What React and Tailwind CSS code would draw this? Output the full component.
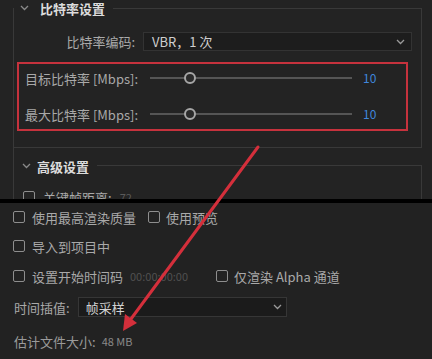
import React from 'react'

function Chevron({ className = '' }) {
  return (
    <svg width="9" height="6" viewBox="0 0 9 6" className={className}>
      <path d="M1 1 L4.5 4.5 L8 1" fill="none" stroke="currentColor" strokeWidth="1.3" />
    </svg>
  )
}

function Box() {
  return <span className="inline-block w-[12px] h-[12px] border-[1.5px] border-[#8e8e8e] rounded-[2px] shrink-0" />
}

function Slider({ pos }) {
  return (
    <div className="relative w-[202px] h-[12px] flex items-center">
      <div className="w-full h-[2px] bg-[#555]" />
      <div
        className="absolute top-0 w-[12px] h-[12px] rounded-full border-2 border-[#a6a6a6] bg-[#2a2a2a]"
        style={{ left: pos - 6 }}
      />
    </div>
  )
}

export default function App() {
  return (
    <div
      className="relative w-[432px] h-[359px] overflow-hidden bg-[#232323] text-[13px] leading-none text-[#a9a9a9]"
      style={{ fontFamily: '"Noto Sans CJK SC", "Noto Sans", sans-serif' }}
    >
      {/* Upper panel */}
      <div className="h-[199px] overflow-hidden pl-[13px] pr-[10px]">
        <div className="h-full border-l border-[#393939]">
          {/* 比特率设置 */}
          <div className="mt-[8px] h-[140px] border-t border-r border-b border-[#393939]">
            <div className="-mt-[9px] flex items-center h-[16px] w-[99px] bg-[#232323] pl-[6px] text-[#dcdcdc]">
              <Chevron className="text-[#8a8a8a]" />
              <span className="ml-[11px] font-bold">比特率设置</span>
            </div>

            <div className="mt-[16px] flex items-center h-[19px]">
              <span className="w-[121px] text-right">比特率编码:</span>
              <div className="ml-[8px] w-[269px] h-[19px] flex items-center justify-between bg-[#1d1d1d] border border-[#333] pl-[8px] pr-[6px] text-[#cfcfcf]">
                <span>VBR，1 次</span>
                <Chevron className="text-[#9a9a9a]" />
              </div>
            </div>

            <div className="mt-[11px] ml-[3px] w-[391px] h-[69px] border-2 border-[#c6323d] pl-[6px] flex flex-col gap-[8px]">
              <div className="flex items-center h-[28px]">
                <span className="w-[125px]">目标比特率 [Mbps]:</span>
                <Slider pos={40} />
                <span className="ml-[11px] text-[12px] text-[#3f86dc]">10</span>
              </div>
              <div className="flex items-center h-[28px]">
                <span className="w-[125px]">最大比特率 [Mbps]:</span>
                <Slider pos={40} />
                <span className="ml-[11px] text-[12px] text-[#3f86dc]">10</span>
              </div>
            </div>
          </div>

          {/* 高级设置 */}
          <div className="mt-[17px] h-[60px] border-t border-r border-[#393939]">
            <div className="-mt-[8px] flex items-center h-[16px] w-[83px] bg-[#232323] pl-[8px] text-[#dcdcdc]">
              <Chevron className="text-[#8a8a8a]" />
              <span className="ml-[6px] font-bold">高级设置</span>
            </div>
            <div className="mt-[17px] ml-[9px] flex items-center gap-[8px] h-[12px]">
              <Box />
              <span>关键帧距离:</span>
              <span className="text-[11px] text-[#5a5a5a]">72</span>
            </div>
          </div>
        </div>
      </div>

      <div className="h-[4px] bg-black" />

      {/* Lower panel */}
      <div className="bg-[#222222] pl-[13px]">
        <div className="flex items-center h-[28px]">
          <Box />
          <span className="ml-[7px]">使用最高渲染质量</span>
          <span className="ml-[12px]"><Box /></span>
          <span className="ml-[6px]">使用预览</span>
        </div>
        <div className="flex items-center h-[30px]">
          <Box />
          <span className="ml-[7px]">导入到项目中</span>
        </div>
        <div className="flex items-center h-[30px]">
          <Box />
          <span className="ml-[7px]">设置开始时间码</span>
          <span className="ml-[7px] text-[11px] text-[#505050]">00:00:00:00</span>
          <span className="ml-[28px]"><Box /></span>
          <span className="ml-[6px]">仅渲染 Alpha 通道</span>
        </div>
        <div className="flex items-center h-[32px] pl-[1px]">
          <span>时间插值:</span>
          <div className="ml-[8px] w-[209px] h-[20px] flex items-center justify-between bg-[#1b1b1b] border border-[#363636] pl-[7px] pr-[4px] text-[#d2d2d2]">
            <span>帧采样</span>
            <Chevron className="text-[#9a9a9a]" />
          </div>
        </div>
        <div className="flex items-center h-[36px] pl-[1px] text-[#9a9a9a]">
          <span>估计文件大小:</span>
          <span className="ml-[6px] text-[11px] text-[#8a8a8a]">48 MB</span>
        </div>
      </div>

      {/* annotation arrow */}
      <svg className="absolute inset-0 pointer-events-none" width="432" height="359">
        <line x1="258" y1="147" x2="128" y2="323" stroke="#d42f3b" strokeWidth="3" strokeLinecap="round" />
        <polygon points="123,331 137,323 125,314" fill="#d42f3b" />
      </svg>
    </div>
  )
}
